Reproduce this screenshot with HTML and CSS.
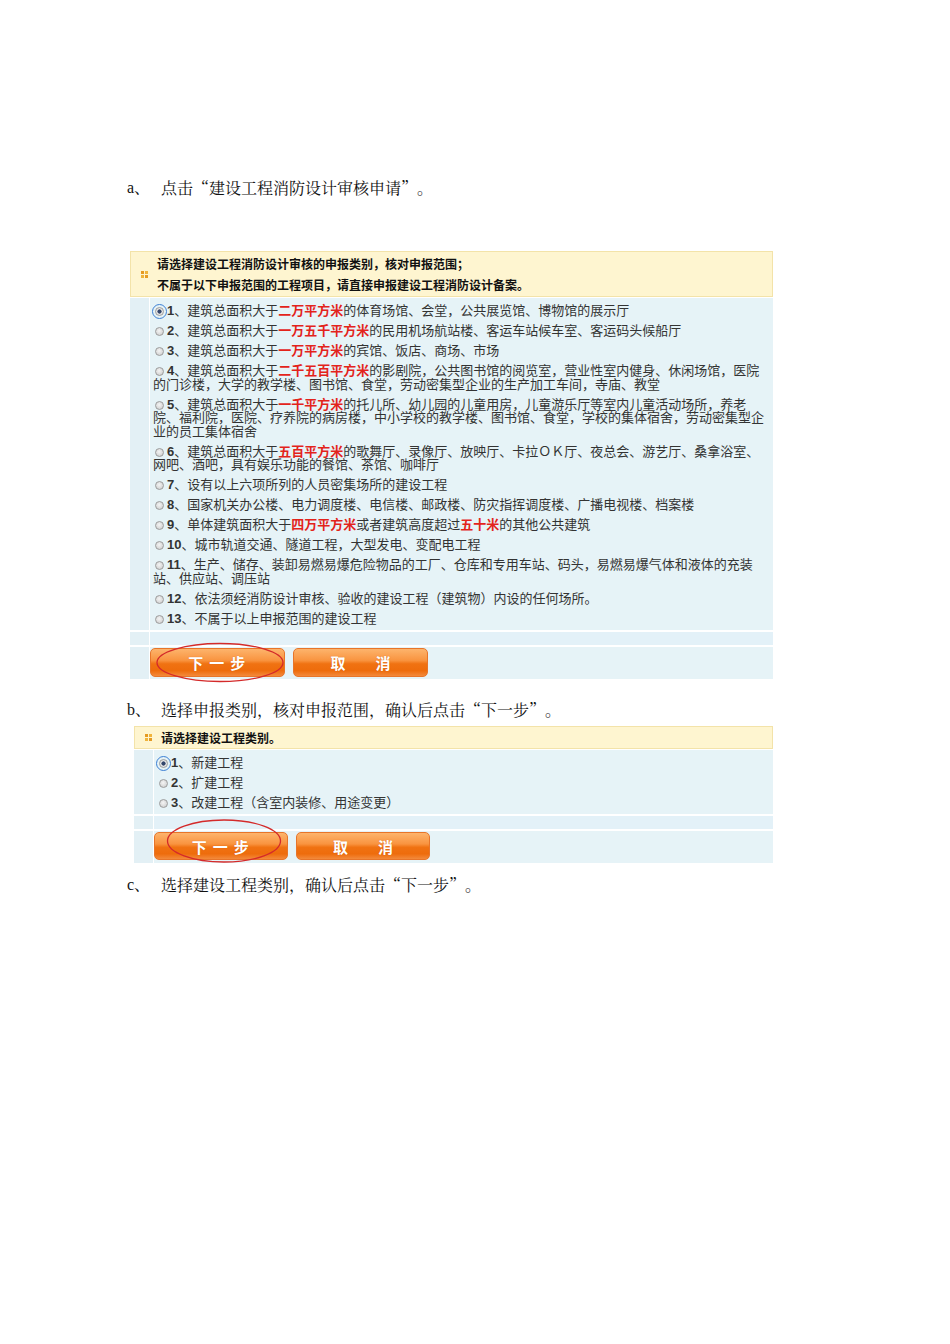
FILE: index.html
```html
<!DOCTYPE html>
<html lang="zh-CN">
<head>
<meta charset="utf-8">
<title>建设工程消防设计审核申请</title>
<link rel="stylesheet" href="styles.css">
</head>
<body>
<div class="page">
  <p class="step"><span class="lbl">a、</span><span class="txt">点击<span class="ql">“</span>建设工程消防设计审核申请<span class="qr">”</span>。</span></p>

  <div class="panel p1">
    <div class="hd hd1">
      <i class="ico"><b></b><b></b><b></b><b></b></i>
      <div class="hd-text">请选择建设工程消防设计审核的申报类别，核对申报范围；<br>不属于以下申报范围的工程项目，请直接申报建设工程消防设计备案。</div>
    </div>
    <div class="row body">
      <div class="side"></div>
      <div class="cell list">
        <div class="item"><span class="radio on"></span><b class="n">1</b>、建筑总面积大于<em>二万平方米</em>的体育场馆、会堂，公共展览馆、博物馆的展示厅</div>
        <div class="item"><span class="radio"></span><b class="n">2</b>、建筑总面积大于<em>一万五千平方米</em>的民用机场航站楼、客运车站候车室、客运码头候船厅</div>
        <div class="item"><span class="radio"></span><b class="n">3</b>、建筑总面积大于<em>一万平方米</em>的宾馆、饭店、商场、市场</div>
        <div class="item"><span class="radio"></span><b class="n">4</b>、建筑总面积大于<em>二千五百平方米</em>的影剧院，公共图书馆的阅览室，营业性室内健身、休闲场馆，医院的门诊楼，大学的教学楼、图书馆、食堂，劳动密集型企业的生产加工车间，寺庙、教堂</div>
        <div class="item"><span class="radio"></span><b class="n">5</b>、建筑总面积大于<em>一千平方米</em>的托儿所、幼儿园的儿童用房，儿童游乐厅等室内儿童活动场所，养老院、福利院，医院、疗养院的病房楼，中小学校的教学楼、图书馆、食堂，学校的集体宿舍，劳动密集型企业的员工集体宿舍</div>
        <div class="item"><span class="radio"></span><b class="n">6</b>、建筑总面积大于<em>五百平方米</em>的歌舞厅、录像厅、放映厅、卡拉ＯＫ厅、夜总会、游艺厅、桑拿浴室、网吧、酒吧，具有娱乐功能的餐馆、茶馆、咖啡厅</div>
        <div class="item"><span class="radio"></span><b class="n">7</b>、设有以上六项所列的人员密集场所的建设工程</div>
        <div class="item"><span class="radio"></span><b class="n">8</b>、国家机关办公楼、电力调度楼、电信楼、邮政楼、防灾指挥调度楼、广播电视楼、档案楼</div>
        <div class="item"><span class="radio"></span><b class="n">9</b>、单体建筑面积大于<em>四万平方米</em>或者建筑高度超过<em>五十米</em>的其他公共建筑</div>
        <div class="item"><span class="radio"></span><b class="n">10</b>、城市轨道交通、隧道工程，大型发电、变配电工程</div>
        <div class="item"><span class="radio"></span><b class="n">11</b>、生产、储存、装卸易燃易爆危险物品的工厂、仓库和专用车站、码头，易燃易爆气体和液体的充装站、供应站、调压站</div>
        <div class="item"><span class="radio"></span><b class="n">12</b>、依法须经消防设计审核、验收的建设工程（建筑物）内设的任何场所。</div>
        <div class="item"><span class="radio"></span><b class="n">13</b>、不属于以上申报范围的建设工程</div>
      </div>
    </div>
    <div class="row blank"><div class="side"></div><div class="cell"></div></div>
    <div class="row btns">
      <div class="side"></div>
      <div class="cell btn-cell">
        <span class="btn next">下 一 步</span>
        <span class="btn">取　　消</span>
      </div>
      <svg class="mark mark1" width="132" height="42" viewBox="0 0 132 42"><ellipse cx="66" cy="20.5" rx="63" ry="19" fill="none" stroke="#d42a2a" stroke-width="1.3"/></svg>
    </div>
  </div>

  <p class="step step-b"><span class="lbl">b、</span><span class="txt">选择申报类别，核对申报范围，确认后点击<span class="ql">“</span>下一步<span class="qr">”</span>。</span></p>

  <div class="panel p2">
    <div class="hd hd2">
      <i class="ico"><b></b><b></b><b></b><b></b></i>
      <div class="hd-text">请选择建设工程类别。</div>
    </div>
    <div class="row body">
      <div class="side"></div>
      <div class="cell list">
        <div class="item"><span class="radio on"></span><b class="n">1</b>、新建工程</div>
        <div class="item"><span class="radio"></span><b class="n">2</b>、扩建工程</div>
        <div class="item"><span class="radio"></span><b class="n">3</b>、改建工程（含室内装修、用途变更）</div>
      </div>
    </div>
    <div class="row blank"><div class="side"></div><div class="cell"></div></div>
    <div class="row btns">
      <div class="side"></div>
      <div class="cell btn-cell">
        <span class="btn b2 next">下 一 步</span>
        <span class="btn b2">取　　消</span>
      </div>
      <svg class="mark mark2" width="118" height="46" viewBox="0 0 118 46"><ellipse cx="59" cy="23" rx="56.5" ry="21" fill="none" stroke="#d42a2a" stroke-width="1.3"/></svg>
    </div>
  </div>

  <p class="step step-c"><span class="lbl">c、</span><span class="txt">选择建设工程类别，确认后点击<span class="ql">“</span>下一步<span class="qr">”</span>。</span></p>
</div>
</body>
</html>
```

FILE: styles.css
```css
html, body {
  margin: 0;
  padding: 0;
  background: #ffffff;
}

.page {
  width: 950px;
  min-height: 1344px;
  box-sizing: border-box;
  padding: 178px 0 0 127px;
}

.step {
  margin: 0;
  display: flex;
  font-size: 16px;
  line-height: 20px;
  color: #111;
}

.step .lbl {
  width: 34px;
  font-family: "Liberation Serif", "Noto Serif CJK SC", "Noto Sans CJK SC", serif;
}

.step .txt {
  font-family: "Noto Serif CJK SC", "Noto Sans CJK SC", serif;
}

.step .ql,
.step .qr {
  display: inline-block;
  width: 16px;
}

.step .ql { text-align: right; }
.step .qr { text-align: left; }

.step-b { margin-top: 21.5px; }
.step-c { margin-top: 12px; }

/* panels */
.panel {
  display: flex;
  flex-direction: column;
  background: #ffffff;
}

.p1 {
  width: 643px;
  margin-left: 3px;
  margin-top: 53px;
}

.p2 {
  width: 639px;
  margin-left: 7px;
  margin-top: 6px;
}

.hd {
  display: flex;
  align-items: center;
  box-sizing: border-box;
  background: #fef5d0;
  border: 1px solid #f3e3a9;
  margin-bottom: 1px;
  font-family: "Noto Sans CJK SC", sans-serif;
  font-size: 12px;
  font-weight: bold;
  color: #111;
}

.hd1 {
  height: 46px;
  line-height: 21px;
}

.hd2 {
  height: 23px;
  line-height: 21px;
}

.ico {
  display: grid;
  grid-template-columns: 3px 3px;
  grid-template-rows: 3px 3px;
  gap: 1px;
  margin: 0 9px 0 10px;
}

.ico b {
  display: block;
  background: #e59a22;
}

.ico b:nth-child(2),
.ico b:nth-child(3) {
  background: #f0b43c;
}

.row {
  display: grid;
  grid-template-columns: 19px 1fr;
  column-gap: 1px;
  position: relative;
}

.side {
  background: #e3f0f5;
}

.cell {
  background: #e6f3f7;
}

.list {
  padding: 2px 7px 2px 3px;
  font-family: "Noto Sans CJK SC", sans-serif;
  font-size: 13px;
  line-height: 13.5px;
  color: #333;
}

.item {
  padding: 3.25px 0;
}

.item em {
  font-style: normal;
  font-weight: bold;
  color: #e3231b;
}

.n {
  font-family: "Liberation Sans", Arial, sans-serif;
  font-weight: bold;
  font-size: 13px;
  line-height: 0;
  color: #333;
}

.radio {
  display: inline-block;
  box-sizing: border-box;
  width: 9px;
  height: 9px;
  border-radius: 50%;
  border: 1px solid #9c9c9c;
  background: radial-gradient(circle at 45% 40%, #f4f4f4 0, #cfcfcf 85%);
  vertical-align: -1px;
  margin: 0 3px 0 2px;
}

.radio.on {
  background: radial-gradient(circle, #33466b 0, #33466b 1.8px, #e6e6e6 2.4px);
  outline: 1px solid #3b7fd4;
  outline-offset: 2px;
}

.blank {
  margin: 2px 0;
  height: 13px;
}

.blank .cell {
  background: #e3f1f8;
}

.btns {
  height: 32px;
}

.btn-cell {
  display: flex;
  align-items: flex-start;
  gap: 8px;
  padding-top: 1px;
}

.btn {
  display: flex;
  align-items: center;
  justify-content: center;
  box-sizing: border-box;
  width: 135px;
  height: 29px;
  border: 1px solid #e7752a;
  border-radius: 5px;
  background: linear-gradient(#fdb46c 0%, #f99440 42%, #f07212 55%, #ee6c0c 80%, #f38a3c 100%);
  color: #ffffff;
  font-family: "Noto Sans CJK SC", sans-serif;
  font-size: 15px;
  font-weight: bold;
  white-space: pre;
  text-shadow: 0 0 1px rgba(180, 70, 0, 0.5);
}

.btn.next {
  letter-spacing: 1.3px;
}

.btn.b2 {
  width: 134px;
  height: 28px;
}

.mark {
  position: absolute;
  overflow: visible;
}

.mark1 {
  left: 24px;
  top: -5px;
}

.mark2 {
  left: 31px;
  top: -13px;
}
```
